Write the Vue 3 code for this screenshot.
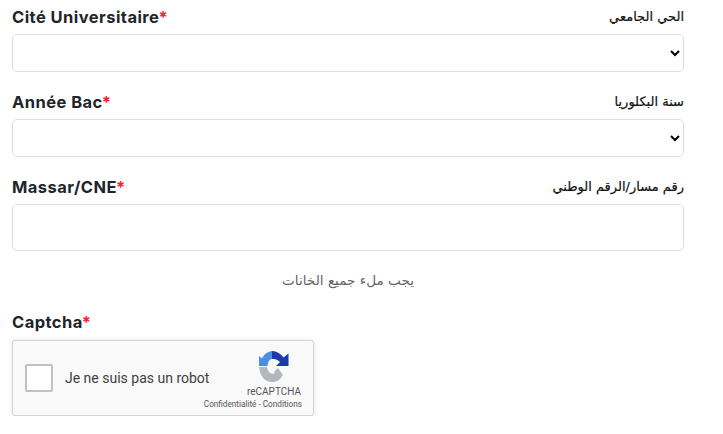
<script setup>
const selects = [
  { label: 'Cité Universitaire', ar: 'الحي الجامعي' },
  { label: 'Année Bac', ar: 'سنة البكلوريا' },
]
</script>

<template>
  <div class="page">
    <div v-for="s in selects" :key="s.label" class="field">
      <div class="labels">
        <span class="fr">{{ s.label }}<span class="req">*</span></span>
        <span class="ar" dir="rtl">{{ s.ar }}</span>
      </div>
      <select class="control sel"></select>
    </div>
    <div class="field">
      <div class="labels">
        <span class="fr">Massar/CNE<span class="req">*</span></span>
        <span class="ar" dir="rtl">رقم مسار/الرقم الوطني</span>
      </div>
      <input class="control inp" type="text" />
    </div>
    <p class="msg" dir="rtl">يجب ملء جميع الخانات</p>
    <div class="labels captcha-label">
      <span class="fr">Captcha<span class="req">*</span></span>
    </div>
    <div class="captcha">
      <div class="check"></div>
      <span class="robot">Je ne suis pas un robot</span>
      <div class="brand">
        <div class="mark">
          <svg class="logo" viewBox="7 5 33 34" width="33" height="34">
            <path d="M22 6 L22 14 C19 14.500 18 17 17.500 21 L9 21 L9 11 L12 13.500 C14 9 18 6.500 22 6 Z" fill="#4a90e2" />
            <path d="M22 6 C27 6 31 9 33.500 12.500 L38.500 8.500 L38.500 21 L26 21 L30 17 C28.500 15 25.500 13.500 22 14 Z" fill="#1c3aa9" />
            <path d="M9 22 L17 22 C17.500 26 20 29 24 29 L24.500 26 L28 23 L33 30 C30 35 27 37 22 37 C15 37 10 31 9 22 Z" fill="#b4b7bb" />
          </svg>
          <span class="re">reCAPTCHA</span>
        </div>
        <span class="links">Confidentialité - Conditions</span>
      </div>
    </div>
  </div>
</template>

<style scoped>
.page {
  width: 672px;
  margin-left: 12px;
  padding-top: 8px;
  font-family: "Liberation Sans", sans-serif;
  color: #212529;
}
.field {
  margin-bottom: 21px;
}
.labels {
  display: flex;
  justify-content: space-between;
  align-items: center;
  height: 18px;
  margin-bottom: 8px;
}
.fr {
  font-family: "Inter", sans-serif;
  font-weight: 700;
  font-size: 16.500px;
  letter-spacing: 0.45px;
  line-height: 18px;
  color: #212529;
}
.req {
  color: #ff1a2e;
  letter-spacing: 0;
  margin-left: -1px;
}
.ar {
  font-family: "DejaVu Sans", sans-serif;
  font-size: 13px;
  line-height: 18px;
  color: #111;
  -webkit-text-stroke: 0.2px #111;
}
.control {
  display: block;
  width: 100%;
  box-sizing: border-box;
  border: 1px solid #dcdfe2;
  border-radius: 5px;
  background-color: #fff;
}
.sel {
  height: 38px;
  padding: 0 12px;
}
.inp {
  height: 47px;
  padding: 0 12px;
}
.msg {
  margin: 0;
  text-align: center;
  font-family: "DejaVu Sans", sans-serif;
  font-size: 13.600px;
  line-height: 18px;
  color: #666;
  margin-top: -1px;
  margin-bottom: 24px;
}
.captcha-label {
  margin-bottom: 9px;
}
.captcha {
  display: flex;
  align-items: center;
  box-sizing: border-box;
  width: 302px;
  height: 76px;
  border: 1px solid #d3d3d3;
  border-radius: 3px;
  background: #f9f9f9;
  box-shadow: 0 0 4px 1px rgba(0, 0, 0, 0.08);
  position: relative;
}
.check {
  width: 28px;
  height: 28px;
  box-sizing: border-box;
  border: 2px solid #c1c1c1;
  border-radius: 2px;
  background: #fff;
  margin-left: 12px;
}
.robot {
  margin-left: 12px;
  font-family: "Roboto", sans-serif;
  font-size: 14px;
  color: #404040;
  white-space: nowrap;
}
.brand {
  position: absolute;
  top: 9px;
  right: 11px;
  display: flex;
  flex-direction: column;
  align-items: flex-end;
}
.mark {
  display: flex;
  flex-direction: column;
  align-items: center;
  margin-right: 1px;
}
.logo {
  display: block;
}
.re {
  margin-top: 2px;
  font-family: "Roboto", sans-serif;
  font-size: 10px;
  line-height: 12px;
  color: #555;
}
.links {
  margin-top: 1px;
  font-family: "Roboto", sans-serif;
  font-size: 8.200px;
  line-height: 10px;
  color: #555;
  white-space: nowrap;
}
</style>
